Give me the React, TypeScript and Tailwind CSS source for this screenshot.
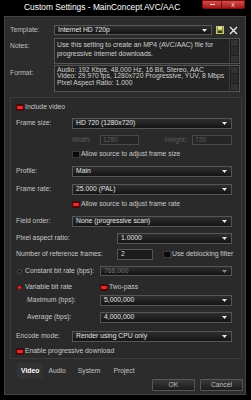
import clsx from "clsx";

function Arrow({ dim }: { dim?: boolean }) {
  return (
    <svg width="5" height="3" viewBox="0 0 5 3" className="shrink-0">
      <path d="M0 0H5L2.5 3Z" fill={dim ? "#8a8a8a" : "#e8e8e8"} />
    </svg>
  );
}

function Dropdown({ value, className, disabled }: { value: string; className?: string; disabled?: boolean }) {
  return (
    <div
      className={clsx(
        "flex h-full items-center justify-between border border-[#565656] bg-linear-to-b from-[#2e2e2e] to-[#151515] pl-[3px] pr-[4px]",
        disabled ? "text-[#6e6e6e]" : "text-[#e2e2e2]",
        className
      )}
    >
      <span className="leading-none">{value}</span>
      <Arrow dim={disabled} />
    </div>
  );
}

function Check({ on }: { on?: boolean }) {
  return on ? (
    <span className="flex h-[7px] w-[8px] shrink-0 items-center justify-center rounded-[1px] bg-[#4a0808]">
      <span className="h-[3px] w-[6px] rounded-[1px] bg-[#e8282a]" />
    </span>
  ) : (
    <span className="h-[7px] w-[8px] shrink-0 border border-[#3a3a3a] bg-[#0a0a0a]" />
  );
}

function Radio({ on }: { on?: boolean }) {
  return (
    <span
      className={clsx(
        "h-[5px] w-[5px] shrink-0 rounded-full border",
        on ? "border-[#6a0c0c] bg-[#e02a2a]" : "border-[#585858] bg-[#121212]"
      )}
    />
  );
}

function ScrollBar() {
  return (
    <div className="flex w-[10px] shrink-0 flex-col gap-[1px] border-l border-[#3a3a3a] bg-[#1e1e1e] p-[1px]">
      <div className="h-[6px] bg-[#333]" />
      <div className="flex-1 bg-[#2b2b2b]" />
      <div className="h-[6px] bg-[#333]" />
    </div>
  );
}

function Row({ label, className, children }: { label: string; className?: string; children: React.ReactNode }) {
  return (
    <div className={clsx("flex h-[11px] items-center", className)}>
      <span className="w-[56px] shrink-0 text-[#c4c4c4]">{label}</span>
      {children}
    </div>
  );
}

export default function App() {
  return (
    <div className="flex h-[400px] w-[251px] flex-col bg-black font-['Liberation_Sans',Arial,sans-serif] text-[6.8px] text-[#c8c8c8]">
      {/* Title bar */}
      <div className="flex h-[16px] shrink-0 items-start">
        <span className="ml-[24px] mt-[3px] text-[8.4px] leading-none text-white">Custom Settings - MainConcept AVC/AAC</span>
        <div className="ml-auto mr-[6px] flex h-[9px]">
          <div className="flex w-[20px] items-center justify-center rounded-bl-[2px] border border-[#7a1010] bg-linear-to-b from-[#d84a4a] to-[#a01818]">
            <span className="h-[1px] w-[5px] bg-[#f0d0d0]" />
          </div>
          <div className="flex w-[23px] items-center justify-center rounded-br-[2px] border border-l-0 border-[#7a1010] bg-linear-to-b from-[#d84a4a] to-[#a01818] text-[7px] leading-none text-[#f4dada]">
            x
          </div>
        </div>
      </div>

      {/* Window body */}
      <div className="ml-[4px] flex h-[379px] w-[242px] flex-col border border-[#444] bg-[#2c2c2c] pl-[5px]">
        <div className="mt-[8px] flex h-[10px] items-center">
          <span className="w-[44px] shrink-0 text-[#bcbcbc]">Template:</span>
          <Dropdown value="Internet HD 720p" className="w-[158px]" />
          <svg width="8" height="8" viewBox="0 0 8 8" className="ml-[4px]">
            <rect x="0.5" y="0.5" width="7" height="7" fill="#8a8a3a" stroke="#c8c86a" />
            <rect x="2" y="1" width="4" height="2.5" fill="#e8e8c0" />
            <rect x="2" y="5" width="4" height="2" fill="#3a3a20" />
          </svg>
          <svg width="9" height="9" viewBox="0 0 9 9" className="ml-[5px]">
            <path d="M1 1L8 8M8 1L1 8" stroke="#f0f0f0" strokeWidth="1.3" />
          </svg>
        </div>

        <div className="mt-[3px] flex h-[26px]">
          <span className="w-[44px] shrink-0 pt-[3px] text-[#bcbcbc]">Notes:</span>
          <div className="flex w-[186px] border border-[#555] bg-[#232323]">
            <div className="flex-1 px-[2px] pt-[1px] leading-[9px] text-[#d0d0d0]">
              Use this setting to create an MP4 (AVC/AAC) file for progressive internet downloads.
            </div>
            <ScrollBar />
          </div>
        </div>

        <div className="mt-[1px] flex h-[27px]">
          <span className="w-[44px] shrink-0 pt-[3px] text-[#bcbcbc]">Format:</span>
          <div className="flex w-[186px] border border-[#555] bg-[#232323]">
            <div className="flex-1 px-[2px] pt-[1px] leading-[6.3px] text-[#d0d0d0]">
              <div>Audio: 192 Kbps, 48,000 Hz, 16 Bit, Stereo, AAC</div>
              <div>Video: 29.970 fps, 1280x720 Progressive, YUV, 8 Mbps</div>
              <div>Pixel Aspect Ratio: 1.000</div>
            </div>
            <ScrollBar />
          </div>
        </div>

        {/* Video tab panel */}
        <div className="mt-[5px] flex h-[262px] w-[232px] flex-col border border-[#3c3c3c] bg-[#2a2a2a] pl-[5px]">
          <div className="mt-[5px] flex h-[9px] items-center gap-[1px]">
            <Check on />
            <span>Include video</span>
          </div>

          <Row label="Frame size:" className="mt-[6px]">
            <Dropdown value="HD 720 (1280x720)" className="w-[160px]" />
          </Row>

          <div className="mt-[6px] flex h-[10px] items-center pl-[56px] text-[#5c5c5c]">
            <span className="w-[28px]">Width:</span>
            <div className="flex h-full w-[39px] items-center border border-[#484848] bg-[#262626] pl-[2px]">1280</div>
            <span className="ml-[26px] w-[27px]">Height:</span>
            <div className="flex h-full w-[40px] items-center border border-[#484848] bg-[#262626] pl-[2px]">720</div>
          </div>

          <div className="mt-[5px] flex h-[8px] items-center gap-[1px] pl-[56px]">
            <Check />
            <span>Allow source to adjust frame size</span>
          </div>

          <Row label="Profile:" className="mt-[8px] h-[10px]">
            <Dropdown value="Main" className="w-[160px]" />
          </Row>

          <Row label="Frame rate:" className="mt-[7px]">
            <Dropdown value="25.000 (PAL)" className="w-[160px]" />
          </Row>

          <div className="mt-[5px] flex h-[8px] items-center gap-[1px] pl-[56px]">
            <Check on />
            <span>Allow source to adjust frame rate</span>
          </div>

          <Row label="Field order:" className="mt-[8px]">
            <Dropdown value="None (progressive scan)" className="w-[160px]" />
          </Row>

          <div className="mt-[6px] flex h-[11px] items-center">
            <span className="w-[101px] shrink-0">Pixel aspect ratio:</span>
            <Dropdown value="1.0000" className="w-[115px]" />
          </div>

          <div className="mt-[5px] flex h-[11px] items-center">
            <span className="w-[101px] shrink-0">Number of reference frames:</span>
            <div className="flex h-full w-[36px] items-center border border-[#555] bg-[#1c1c1c] pl-[3px] text-[#d8d8d8]">2</div>
            <div className="ml-[10px] flex items-center gap-[1px]">
              <Check />
              <span>Use deblocking filter</span>
            </div>
          </div>

          <div className="mt-[6px] flex h-[10px] items-center">
            <div className="flex w-[84px] shrink-0 items-center gap-[3px] pl-[1px]">
              <Radio />
              <span>Constant bit rate (bps):</span>
            </div>
            <Dropdown value="768,000" disabled className="w-[132px]" />
          </div>

          <div className="mt-[7px] flex h-[8px] items-center">
            <div className="flex w-[84px] shrink-0 items-center gap-[3px] pl-[1px]">
              <Radio on />
              <span>Variable bit rate</span>
            </div>
            <div className="flex items-center gap-[1px]">
              <Check on />
              <span>Two-pass</span>
            </div>
          </div>

          <div className="mt-[4px] flex h-[11px] items-center">
            <span className="w-[84px] shrink-0 pl-[11px]">Maximum (bps):</span>
            <Dropdown value="5,000,000" className="w-[132px]" />
          </div>

          <div className="mt-[6px] flex h-[11px] items-center">
            <span className="w-[84px] shrink-0 pl-[11px]">Average (bps):</span>
            <Dropdown value="4,000,000" className="w-[132px]" />
          </div>

          <Row label="Encode mode:" className="mt-[8px]">
            <Dropdown value="Render using CPU only" className="w-[160px]" />
          </Row>

          <div className="mt-[5px] flex h-[8px] items-center gap-[1px]">
            <Check on />
            <span>Enable progressive download</span>
          </div>
        </div>

        {/* Tabs */}
        <div className="mt-[5px] flex h-[14px] items-center pl-[7px]">
          <span className="rounded-b-[3px] bg-[#333] px-[4px] py-[3px] font-bold text-white">Video</span>
          <span className="ml-[5px] text-[#c0c0c0]">Audio</span>
          <span className="ml-[12px] text-[#c0c0c0]">System</span>
          <span className="ml-[13px] text-[#c0c0c0]">Project</span>
        </div>

        {/* Buttons */}
        <div className="mt-[1px] flex h-[12px] justify-end gap-[5px] pr-[2px]">
          <div className="flex w-[43px] items-center justify-center rounded-[1px] border border-[#575757] bg-linear-to-b from-[#3a3a3a] to-[#1c1c1c] text-[#bdbdbd]">
            OK
          </div>
          <div className="flex w-[43px] items-center justify-center rounded-[1px] border border-[#575757] bg-linear-to-b from-[#3a3a3a] to-[#1c1c1c] text-[#bdbdbd]">
            Cancel
          </div>
        </div>
      </div>
    </div>
  );
}
